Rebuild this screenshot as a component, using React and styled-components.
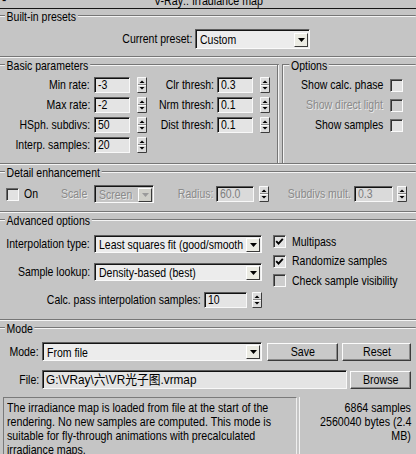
import React from "react";
import styled, { createGlobalStyle } from "styled-components";

const BG = "#c5c5c5";
const DARK = "#767676";
const LIGHT = "#f4f4f4";
const K = 0.82;
const FONT = `"Liberation Sans", Arial, "Noto Sans CJK SC", sans-serif`;

const GlobalStyle = createGlobalStyle`
  html, body { margin: 0; padding: 0; background: ${BG}; }
  body { font-family: ${FONT}; font-size: 12.8px; color: #000; }
  *, *::before, *::after { box-sizing: border-box; }
`;

/* narrow type: the panel uses a condensed sans (Arial Narrow-like) */
const Narrow = styled.span`
  display: inline-block;
  flex: none;
  white-space: nowrap;
  transform: scaleX(${(p) => p.$k ?? K});
  transform-origin: ${(p) => p.$origin ?? "left"} center;
`;

const Panel = styled.div`
  width: 416px;
  height: 454px;
  overflow: hidden;
  background: ${BG};
  display: flex;
  flex-direction: column;
`;

const TitleBar = styled.div`
  flex: none;
  height: 9px;
  overflow: hidden;
  display: grid;
  grid-template-columns: 1fr auto 1fr;
  align-items: start;
  border-bottom: 1px solid #151515;
  font-size: 13px;
  line-height: 14px;
`;
const TitleMinus = styled.span`
  margin-top: -7px;
  padding-left: 2px;
`;
const TitleText = styled.span`
  margin-top: -6px;
  white-space: nowrap;
`;

const Group = styled.section`
  flex: none;
  display: flex;
  flex-direction: ${(p) => (p.$row ? "row" : "column")};
  padding-bottom: ${(p) => p.$pb ?? 0}px;
  border-bottom: ${(p) => (p.$open ? "none" : `1px solid ${DARK}`)};
  box-shadow: ${(p) => (p.$open ? "none" : `0 1px 0 ${LIGHT}`)};
  margin-bottom: ${(p) => (p.$open ? 0 : 1)}px;
`;

const SubBox = styled.div`
  position: relative;
  display: flex;
  flex-direction: column;
  width: ${(p) => (p.$w ? `${p.$w}px` : "auto")};
  flex: ${(p) => (p.$w ? "none" : "1")};
  margin-left: ${(p) => p.$ml ?? 0}px;
  &::after {
    content: "";
    position: absolute;
    top: 7px;
    bottom: -10px;
    ${(p) => (p.$side === "left" ? "left: 0;" : "right: 0;")}
    width: 2px;
    border-left: 1px solid ${DARK};
    border-right: 1px solid ${LIGHT};
  }
`;

const HeaderClip = styled.div`
  height: 14px;
  flex: none;
  overflow: hidden;
`;
const Header = styled.div`
  display: flex;
  align-items: center;
  height: 14px;
  width: calc(100% / ${K});
  transform: scaleX(${K});
  transform-origin: left center;
  &::before {
    content: "";
    flex: none;
    width: ${(p) => p.$lead ?? 6}px;
    height: 2px;
    border-top: 1px solid ${DARK};
    border-bottom: 1px solid ${LIGHT};
  }
  &::after {
    content: "";
    flex: 1;
    height: 2px;
    border-top: 1px solid ${DARK};
    border-bottom: 1px solid ${LIGHT};
  }
`;
const HeaderLabel = styled.span`
  padding: 0 2px;
  line-height: 14px;
  margin-top: 2px;
  white-space: nowrap;
`;

function GroupHeader({ children, lead }) {
  return (
    <HeaderClip>
      <Header $lead={lead}>
        <HeaderLabel>{children}</HeaderLabel>
      </Header>
    </HeaderClip>
  );
}

const LabelBox = styled.span`
  display: flex;
  justify-content: ${(p) => (p.$align === "right" ? "flex-end" : "flex-start")};
  width: ${(p) => (p.$w ? `${p.$w}px` : "auto")};
  flex: none;
  padding-right: ${(p) => p.$pr ?? 0}px;
  padding-left: ${(p) => p.$pl ?? 0}px;
  white-space: nowrap;
  line-height: 14px;
  color: ${(p) => (p.$disabled ? "#8a8a8a" : "#000")};
  text-shadow: ${(p) => (p.$disabled ? "1px 1px 0 #ececec" : "none")};
`;

function Label({ children, align = "right", pr, pl, w, disabled }) {
  return (
    <LabelBox $align={align} $pr={pr} $pl={pl} $w={w} $disabled={disabled}>
      <Narrow $origin={align === "right" ? "right" : "left"}>{children}</Narrow>
    </LabelBox>
  );
}

/* ---------- controls ---------- */

const SelectBox = styled.div`
  width: ${(p) => p.$w}px;
  height: ${(p) => p.$h ?? 19}px;
  flex: none;
  display: flex;
  align-items: center;
  background: ${(p) => (p.$disabled ? BG : "#ececec")};
  border: 1px solid;
  border-color: #5e5e5e #fafafa #fafafa #5e5e5e;
  box-shadow: inset 1px 1px 0 #151515;
  padding: 1px 1px 0 4px;
  color: ${(p) => (p.$disabled ? "#8a8a8a" : "#000")};
  text-shadow: ${(p) => (p.$disabled ? "1px 1px 0 #e8e8e8" : "none")};
`;
const SelectText = styled.span`
  flex: 1;
  min-width: 0;
  overflow: hidden;
  white-space: nowrap;
  line-height: 14px;
  padding-top: 1px;
`;
const ArrowBtn = styled.span`
  flex: none;
  width: 14px;
  height: 14px;
  display: flex;
  align-items: center;
  justify-content: center;
  background: ${(p) => (p.$disabled ? "#cfcfc8" : "#ebebe3")};
  border: 1px solid;
  border-color: #ffffff #3a3a3a #3a3a3a #ffffff;
`;

function Select({ w, h, value, disabled }) {
  return (
    <SelectBox $w={w} $h={h} $disabled={disabled}>
      <SelectText>
        <Narrow>{value}</Narrow>
      </SelectText>
      <ArrowBtn $disabled={disabled}>
        <svg width="7" height="4" viewBox="0 0 7 4">
          <path d="M0 0H7L3.5 4Z" fill={disabled ? "#9a9a9a" : "#000"} />
        </svg>
      </ArrowBtn>
    </SelectBox>
  );
}

const InputBox = styled.div`
  width: ${(p) => p.$w}px;
  height: ${(p) => p.$h ?? 16}px;
  flex: none;
  background: ${(p) => (p.$disabled ? "#dadada" : "#e4e4e4")};
  border: 1px solid;
  border-color: #5a5a5a #f8f8f8 #f8f8f8 #5a5a5a;
  box-shadow: inset 1px 1px 0 #111;
  padding-left: 3px;
  line-height: ${(p) => (p.$h ?? 16) - 2}px;
  white-space: nowrap;
  overflow: hidden;
  color: ${(p) => (p.$disabled ? "#7e7e7e" : "#000")};
`;

function Input({ w, h, k, disabled, children }) {
  return (
    <InputBox $w={w} $h={h} $disabled={disabled}>
      <Narrow $k={k}>{children}</Narrow>
    </InputBox>
  );
}

const SpinBox = styled.span`
  display: flex;
  justify-self: end;
  width: 10px;
  height: 16px;
`;

function Spinner() {
  return (
    <SpinBox>
      <svg width="10" height="16" viewBox="0 0 10 16">
        <rect x="0" y="0" width="10" height="16" fill="#dcdcdc" />
        <path d="M0.5 15.5V0.5H9.5" fill="none" stroke="#fafafa" />
        <path d="M0.5 15.5H9.5V0.5" fill="none" stroke="#3c3c3c" />
        <path d="M1 7.5H9" stroke="#8a8a8a" />
        <path d="M1 8.5H9" stroke="#fafafa" />
        <path d="M2.5 6L5 3.5L7.5 6Z" fill="#000" />
        <path d="M2.5 10L7.5 10L5 12.5Z" fill="#000" />
      </svg>
    </SpinBox>
  );
}

const CheckBox = styled.span`
  flex: none;
  width: 13px;
  height: 13px;
  display: inline-flex;
  align-items: center;
  justify-content: center;
  border: 1px solid;
  border-color: #6a6a6a #fafafa #fafafa #6a6a6a;
  box-shadow: inset 1px 1px 0 #333;
  background: ${(p) => (p.$disabled ? "#cdcdcd" : "#e2e2e2")};
`;

function Check({ checked, disabled }) {
  return (
    <CheckBox $disabled={disabled}>
      {checked && (
        <svg width="9" height="9" viewBox="0 0 9 9">
          <path d="M1.2 4.2L3.5 6.6L7.8 1.8" fill="none" stroke="#000" strokeWidth="1.9" />
        </svg>
      )}
    </CheckBox>
  );
}

const ButtonBox = styled.div`
  width: ${(p) => p.$w}px;
  height: ${(p) => p.$h ?? 18}px;
  margin-left: ${(p) => p.$ml ?? 0}px;
  flex: none;
  display: flex;
  align-items: center;
  justify-content: center;
  background: #c9c9c9;
  border: 1px solid;
  border-color: #fbfbfb #3a3a3a #3a3a3a #fbfbfb;
  box-shadow: inset -1px -1px 0 #8a8a8a;
  line-height: 14px;
  font-size: 13px;
`;

function Button({ w, ml, children }) {
  return (
    <ButtonBox $w={w} $ml={ml}>
      <Narrow $origin="center">{children}</Narrow>
    </ButtonBox>
  );
}

/* ---------- built-in presets ---------- */
const PresetRow = styled.div`
  display: grid;
  grid-template-columns: 192px 115px;
  column-gap: 3px;
  align-items: center;
  margin-top: 6px;
  height: 20px;
`;

/* ---------- basic params ---------- */
const ParamGrid = styled.div`
  display: grid;
  grid-template-columns: 94px 36px 17px 70px 36px 17px;
  grid-auto-rows: 16px;
  row-gap: 4px;
  align-items: center;
  margin-top: 5px;
`;

const OptionList = styled.div`
  display: flex;
  flex-direction: column;
  align-items: flex-end;
  gap: 4px;
  margin-top: 5px;
  padding-right: 13px;
`;
const OptionRow = styled.div`
  display: flex;
  align-items: center;
  height: 16px;
  gap: 7px;
`;

/* ---------- detail ---------- */
const DetailRow = styled.div`
  display: grid;
  grid-template-columns: 13px 42px 33px 60px 62px 38px 15px 85px 39px 14px;
  align-items: center;
  height: 18px;
  margin-top: 6px;
  padding-left: 6px;
`;

/* ---------- advanced ---------- */
const AdvBody = styled.div`
  display: flex;
  margin-top: 8px;
`;
const AdvLeft = styled.div`
  display: flex;
  flex-direction: column;
  gap: 10px;
`;
const AdvRow = styled.div`
  display: grid;
  grid-template-columns: ${(p) => p.$cols};
  align-items: center;
  height: 18px;
`;
const AdvRight = styled.div`
  display: flex;
  flex-direction: column;
  gap: 6.5px;
  margin-left: 11px;
`;
const CheckRow = styled.div`
  display: flex;
  align-items: center;
  gap: 6px;
  height: 13px;
`;

/* ---------- mode ---------- */
const ModeBody = styled.div`
  display: flex;
  flex-direction: column;
  gap: 9px;
  margin-top: 7px;
`;
const ModeRow = styled.div`
  display: flex;
  align-items: center;
  height: 19px;
`;

const InfoRow = styled.div`
  display: flex;
  margin-top: 8px;
  height: 60px;
  font-size: 13px;
`;
const InfoBox = styled.div`
  width: 294px;
  margin-left: 3px;
  border: 1px solid;
  border-color: #7a7a7a #eeeeee transparent #7a7a7a;
  padding: 3px 3px 0;
  overflow: hidden;
`;
const InfoLine = styled.div`
  line-height: 14px;
  white-space: nowrap;
`;
const InfoSide = styled.div`
  flex: 1;
  margin-left: 2px;
  border-left: 1px solid #f2f2f2;
  text-align: right;
  padding: 4px 5px 0 0;
`;

export default function App() {
  return (
    <>
      <GlobalStyle />
      <Panel>
        <TitleBar>
          <TitleMinus>-</TitleMinus>
          <TitleText>
            <Narrow $origin="center">V-Ray:: Irradiance map</Narrow>
          </TitleText>
          <span />
        </TitleBar>

        <Group $pb={7}>
          <GroupHeader>Built-in presets</GroupHeader>
          <PresetRow>
            <Label>Current preset:</Label>
            <Select w={115} h={20} value="Custom" />
          </PresetRow>
        </Group>

        <Group $row $pb={10}>
          <SubBox $w={279} $side="right">
            <GroupHeader>Basic parameters</GroupHeader>
            <ParamGrid>
              <Label pr={4}>Min rate:</Label>
              <Input w={36}>-3</Input>
              <Spinner />
              <Label pr={3}>Clr thresh:</Label>
              <Input w={36}>0.3</Input>
              <Spinner />

              <Label pr={4}>Max rate:</Label>
              <Input w={36}>-2</Input>
              <Spinner />
              <Label pr={3}>Nrm thresh:</Label>
              <Input w={36}>0.1</Input>
              <Spinner />

              <Label pr={4}>HSph. subdivs:</Label>
              <Input w={36}>50</Input>
              <Spinner />
              <Label pr={3}>Dist thresh:</Label>
              <Input w={36}>0.1</Input>
              <Spinner />

              <Label pr={4}>Interp. samples:</Label>
              <Input w={36}>20</Input>
              <Spinner />
            </ParamGrid>
          </SubBox>
          <SubBox $ml={3} $side="left">
            <GroupHeader lead={9}>Options</GroupHeader>
            <OptionList>
              <OptionRow>
                <Label>Show calc. phase</Label>
                <Check />
              </OptionRow>
              <OptionRow>
                <Label disabled>Show direct light</Label>
                <Check disabled />
              </OptionRow>
              <OptionRow>
                <Label>Show samples</Label>
                <Check />
              </OptionRow>
            </OptionList>
          </SubBox>
        </Group>

        <Group $pb={8}>
          <GroupHeader>Detail enhancement</GroupHeader>
          <DetailRow>
            <Check />
            <Label align="left" pl={5}>On</Label>
            <Label align="left" disabled>Scale</Label>
            <Select w={60} h={18} value="Screen" disabled />
            <Label pr={3} disabled>Radius:</Label>
            <Input w={38} disabled>60.0</Input>
            <Spinner />
            <Label pr={3} disabled>Subdivs mult.</Label>
            <Input w={39} disabled>0.3</Input>
            <Spinner />
          </DetailRow>
        </Group>

        <Group $pb={10}>
          <GroupHeader>Advanced options</GroupHeader>
          <AdvBody>
            <AdvLeft>
              <AdvRow $cols="94px 168px">
                <Label pr={4}>Interpolation type:</Label>
                <Select w={168} h={18} value="Least squares fit (good/smooth" />
              </AdvRow>
              <AdvRow $cols="94px 168px">
                <Label pr={4}>Sample lookup:</Label>
                <Select w={168} h={18} value="Density-based (best)" />
              </AdvRow>
              <AdvRow $cols="204px 43px 15px">
                <Label pr={3}>Calc. pass interpolation samples:</Label>
                <Input w={43}>10</Input>
                <Spinner />
              </AdvRow>
            </AdvLeft>
            <AdvRight>
              <CheckRow>
                <Check checked />
                <Label align="left">Multipass</Label>
              </CheckRow>
              <CheckRow>
                <Check checked />
                <Label align="left">Randomize samples</Label>
              </CheckRow>
              <CheckRow>
                <Check disabled />
                <Label align="left">Check sample visibility</Label>
              </CheckRow>
            </AdvRight>
          </AdvBody>
        </Group>

        <Group $open>
          <GroupHeader>Mode</GroupHeader>
          <ModeBody>
            <ModeRow>
              <Label w={42} pr={3}>Mode:</Label>
              <Select w={220} h={19} value="From file" />
              <Button w={71} ml={5}>Save</Button>
              <Button w={69} ml={4}>Reset</Button>
            </ModeRow>
            <ModeRow>
              <Label w={42} pr={3}>File:</Label>
              <Input w={305} h={19} k={0.92}>{"G:\\VRay\\六\\VR光子图.vrmap"}</Input>
              <Button w={61} ml={3}>Browse</Button>
            </ModeRow>
          </ModeBody>
          <InfoRow>
            <InfoBox>
              <InfoLine><Narrow>The irradiance map is loaded from file at the start of the</Narrow></InfoLine>
              <InfoLine><Narrow>rendering. No new samples are computed. This mode is</Narrow></InfoLine>
              <InfoLine><Narrow>suitable for fly-through animations with precalculated</Narrow></InfoLine>
              <InfoLine><Narrow>irradiance maps.</Narrow></InfoLine>
            </InfoBox>
            <InfoSide>
              <InfoLine><Narrow $origin="right">6864 samples</Narrow></InfoLine>
              <InfoLine><Narrow $origin="right">2560040 bytes (2.4</Narrow></InfoLine>
              <InfoLine><Narrow $origin="right">MB)</Narrow></InfoLine>
            </InfoSide>
          </InfoRow>
        </Group>
      </Panel>
    </>
  );
}
